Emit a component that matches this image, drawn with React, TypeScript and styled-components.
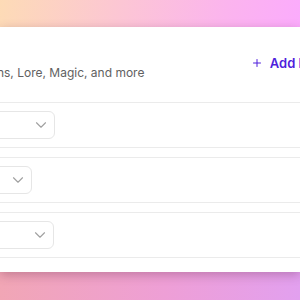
import styled, { createGlobalStyle } from "styled-components";
import { ChevronDown, Plus } from "lucide-react";

const GlobalStyle = createGlobalStyle`
  html, body {
    margin: 0;
    padding: 0;
  }
  body {
    overflow: hidden;
    font-family: Inter, "Noto Sans", "Liberation Sans", sans-serif;
  }
`;

const Page = styled.div`
  width: 300px;
  height: 300px;
  overflow: hidden;
  display: flex;
  flex-direction: column;
`;

const Banner = styled.div`
  height: 27px;
  flex-shrink: 0;
  background: linear-gradient(100deg, #fddbb6 0%, #fcc6d4 40%, #fbb4ee 75%, #fbabfc 100%);
`;

const Panel = styled.section`
  position: relative;
  z-index: 1;
  height: 245px;
  flex-shrink: 0;
  overflow: hidden;
  background: #ffffff;
  box-shadow: 0 3px 10px rgba(90, 30, 60, 0.3);
`;

const Footer = styled.div`
  flex: 1;
  background: linear-gradient(to right, #f1a6b5 0%, #ee9fd6 55%, #e2a0ef 100%);
`;

const Inner = styled.div`
  margin-left: -130px;
  width: 446px;
  padding: 17px 16px 0;
`;

const Header = styled.div`
  display: flex;
  align-items: center;
  justify-content: space-between;
`;

const Title = styled.h3`
  margin: 0;
  font-size: 15px;
  line-height: 20px;
  font-weight: 600;
  color: #1f1f1f;
`;

const Description = styled.p`
  margin: 0;
  font-size: 12px;
  line-height: 18px;
  color: #616161;
  white-space: nowrap;
`;

const AddButton = styled.button`
  display: flex;
  align-items: center;
  gap: 7px;
  padding: 0;
  border: none;
  background: none;
  font-family: inherit;
  font-size: 13px;
  font-weight: 600;
  color: #4f1fdc;
  cursor: pointer;
`;

const List = styled.div`
  display: flex;
  flex-direction: column;
  gap: 9px;
  margin-top: 20px;
`;

const Card = styled.div`
  height: 46px;
  box-sizing: border-box;
  display: flex;
  align-items: center;
  padding: 0 12px;
  border: 1px solid #ebebeb;
  border-radius: 8px;
`;

const Select = styled.div<{ $width: number }>`
  width: ${(p) => p.$width}px;
  height: 28px;
  box-sizing: border-box;
  display: flex;
  align-items: center;
  justify-content: space-between;
  padding: 0 4px 0 10px;
  border: 1px solid #e6e6e6;
  border-radius: 6px;
  font-size: 13px;
  color: #333333;
`;

const sections = [
  { name: "Factions", width: 156 },
  { name: "Lore", width: 133 },
  { name: "Magic", width: 155 },
];

export default function App() {
  return (
    <>
      <GlobalStyle />
      <Page>
        <Banner />
        <Panel>
          <Inner>
            <Header>
              <div>
                <Title>Lore</Title>
                <Description>Characters, Locations, Lore, Magic, and more</Description>
              </div>
              <AddButton>
                <Plus size={12} strokeWidth={2} />
                Add Entry
              </AddButton>
            </Header>
            <List>
              {sections.map((s) => (
                <Card key={s.name}>
                  <Select $width={s.width}>
                    <span>{s.name}</span>
                    <ChevronDown size={18} strokeWidth={1.5} color="#a0a0a0" />
                  </Select>
                </Card>
              ))}
            </List>
          </Inner>
        </Panel>
        <Footer />
      </Page>
    </>
  );
}
